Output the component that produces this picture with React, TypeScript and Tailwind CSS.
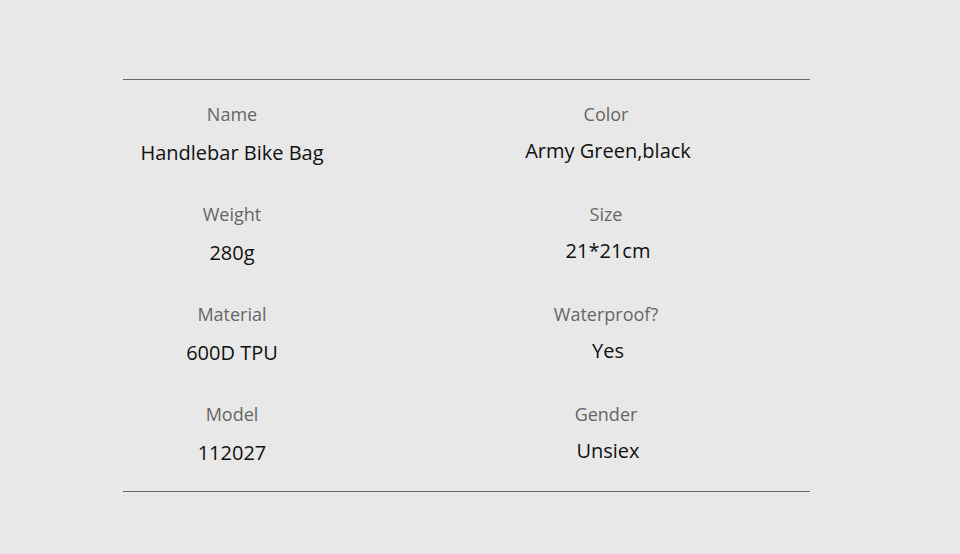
import React from "react";

const rows: [string, string, string, string][] = [
  ["Name", "Handlebar Bike Bag", "Color", "Army Green,black"],
  ["Weight", "280g", "Size", "21*21cm"],
  ["Material", "600D TPU", "Waterproof?", "Yes"],
  ["Model", "112027", "Gender", "Unsiex"],
];

export default function App() {
  return (
    <div
      className="w-[960px] h-[554px] bg-[#e8e8e8] overflow-hidden pt-[79px]"
      style={{ fontFamily: '"Open Sans", "DejaVu Sans", sans-serif' }}
    >
      <div className="ml-[123px] w-[687px] border-t border-b border-[#666666] pt-[22px] pb-[24px]">
        {rows.map(([l1, v1, l2, v2], i) => (
          <div key={i} className={`flex ${i < rows.length - 1 ? "mb-[35px]" : ""}`}>
            <div className="w-[218px] shrink-0 flex flex-col items-center">
              <div className="h-[24px] leading-[24px] text-[18px] text-[#666666]">{l1}</div>
              <div className="mt-[13px] h-[28px] leading-[28px] text-[20px] text-[#111111]">{v1}</div>
            </div>
            <div className="w-[469px] shrink-0 pl-[61px] flex flex-col items-center">
              <div className="h-[24px] leading-[24px] text-[18px] text-[#666666]">{l2}</div>
              <div className="mt-[11px] h-[28px] leading-[28px] text-[20px] text-[#111111] pl-[4px]">{v2}</div>
            </div>
          </div>
        ))}
      </div>
    </div>
  );
}
